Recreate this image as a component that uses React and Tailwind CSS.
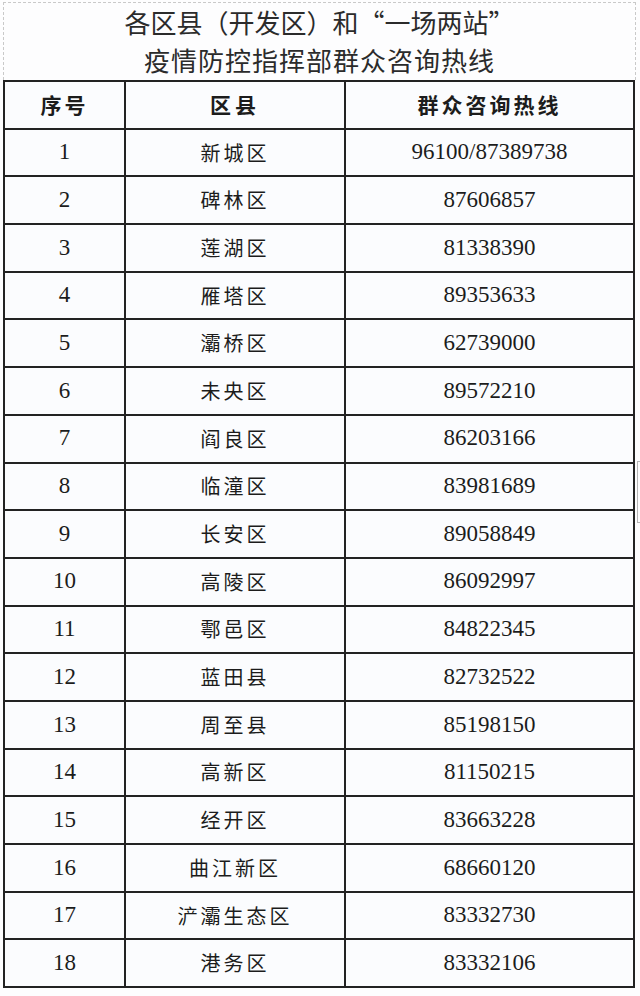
const rows = [
  ["1", "新城区", "96100/87389738"],
  ["2", "碑林区", "87606857"],
  ["3", "莲湖区", "81338390"],
  ["4", "雁塔区", "89353633"],
  ["5", "灞桥区", "62739000"],
  ["6", "未央区", "89572210"],
  ["7", "阎良区", "86203166"],
  ["8", "临潼区", "83981689"],
  ["9", "长安区", "89058849"],
  ["10", "高陵区", "86092997"],
  ["11", "鄠邑区", "84822345"],
  ["12", "蓝田县", "82732522"],
  ["13", "周至县", "85198150"],
  ["14", "高新区", "81150215"],
  ["15", "经开区", "83663228"],
  ["16", "曲江新区", "68660120"],
  ["17", "浐灞生态区", "83332730"],
  ["18", "港务区", "83332106"],
];

const cjk = "font-['Noto_Sans_CJK_SC',sans-serif]";
const num = "font-['Liberation_Serif','Times_New_Roman',serif]";
const cell = "flex items-center justify-center border-r-2 border-b-2 border-[#222]";

export default function App() {
  return (
    <div className="relative w-[640px] h-[996px] bg-[#fdfdfe] text-[#1c1c1c] overflow-hidden">
      {/* title */}
      <div className={`ml-[3px] mt-[2px] w-[633px] h-[78px] border border-b-0 border-dashed border-[#c9c9c9] flex flex-col items-center text-[26px] leading-[38px] text-[#2b2b2b] ${cjk}`}>
        <div>各区县（开发区）和“一场两站”</div>
        <div className="tracking-[1px]">疫情防控指挥部群众咨询热线</div>
      </div>

      {/* table */}
      <div className="ml-[3px] w-[632px] border-l-2 border-t-2 border-[#222] bg-[#fbfcfe]">
        <div className="grid grid-cols-[121px_220px_1fr] h-[47.7px]">
          <div className={`${cell} ${cjk} font-bold text-[21px] tracking-[3px]`}>序号</div>
          <div className={`${cell} ${cjk} font-bold text-[21px] tracking-[4px]`}>区县</div>
          <div className={`${cell} ${cjk} font-bold text-[21px] tracking-[3px]`}>群众咨询热线</div>
        </div>
        {rows.map((r) => (
          <div key={r[0]} className="grid grid-cols-[121px_220px_1fr] h-[47.7px]">
            <div className={`${cell} ${num} text-[23px]`}>{r[0]}</div>
            <div className={`${cell} ${cjk} text-[20px] tracking-[3px]`}>{r[1]}</div>
            <div className={`${cell} ${num} text-[23px]`}>{r[2]}</div>
          </div>
        ))}
      </div>

      {/* stray marks at the right edge */}
      <div className="absolute left-[637px] top-[461px] w-[3px] h-[62px] border-l border-t border-b border-[#b5b5b5]" />
    </div>
  );
}
